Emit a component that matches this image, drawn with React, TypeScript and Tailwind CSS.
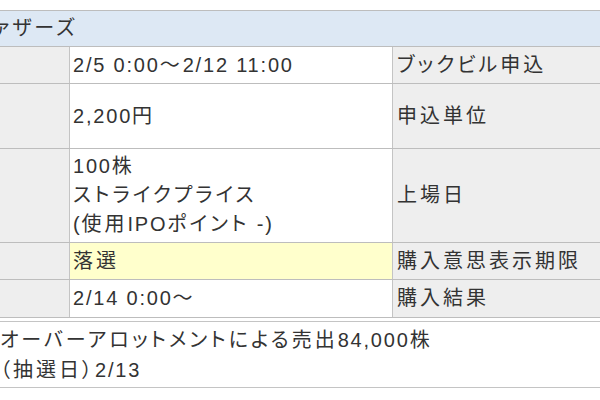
import React from "react";

const font = { fontFamily: "'Liberation Sans', 'Noto Sans CJK JP', sans-serif" };

function T({ s }: { s: string }) {
  const parts = s.split(/([\x20-\x7E]+)/).filter((p) => p.length > 0);
  return (
    <span className="whitespace-pre">
      {parts.map((p, i) =>
        /^[\x20-\x7E]+$/.test(p) ? (
          <span key={i} className="tracking-[1.8px]">
            {p}
          </span>
        ) : (
          <span key={i} className="tracking-[3px]">
            {p}
          </span>
        )
      )}
    </span>
  );
}

function Row({
  h,
  mid,
  right,
  midBg = "bg-white",
}: {
  h: string;
  mid: React.ReactNode;
  right: string;
  midBg?: string;
}) {
  return (
    <div className={`flex border-b border-[#bdbdbd] ${h}`}>
      <div className="w-[70px] shrink-0 border-r border-[#c4c4c4] bg-[#eeeeee]" />
      <div className={`w-[323px] shrink-0 border-r border-[#c4c4c4] ${midBg} flex items-center pl-[3px] whitespace-nowrap`}>
        {mid}
      </div>
      <div className="flex-1 bg-[#eeeeee] flex items-center pl-[4px] whitespace-nowrap">
        <T s={right} />
      </div>
    </div>
  );
}

export default function App() {
  return (
    <div
      className="w-[600px] h-[400px] overflow-hidden bg-white text-[20px] text-[#333333] leading-[29px] [font-feature-settings:'palt']"
      style={font}
    >
      <div className="h-[10px]" />
      <div className="h-[37px] border-t border-b border-[#bdbdbd] bg-[#dde8f4] flex items-center whitespace-nowrap">
        <span className="ml-[-7px]">
          <T s="ァザーズ" />
        </span>
      </div>
      <Row h="h-[37px]" mid={<T s="2/5 0:00〜2/12 11:00" />} right="ブックビル申込" />
      <Row h="h-[65px]" mid={<T s="2,200円" />} right="申込単位" />
      <Row
        h="h-[94px]"
        mid={
          <div className="flex flex-col">
            <T s="100株" />
            <T s="ストライクプライス" />
            <T s="(使用IPOポイント -)" />
          </div>
        }
        right="上場日"
      />
      <Row h="h-[37px]" midBg="bg-[#ffffcc]" mid={<T s="落選" />} right="購入意思表示期限" />
      <Row h="h-[38px]" mid={<T s="2/14 0:00〜" />} right="購入結果" />
      <div className="h-[3px]" />
      <div className="h-[67px] border-t border-b border-[#c4c4c4] flex flex-col justify-center leading-[30px] whitespace-nowrap">
        <T s="オーバーアロットメントによる売出84,000株" />
        <T s="（抽選日）2/13" />
      </div>
    </div>
  );
}
